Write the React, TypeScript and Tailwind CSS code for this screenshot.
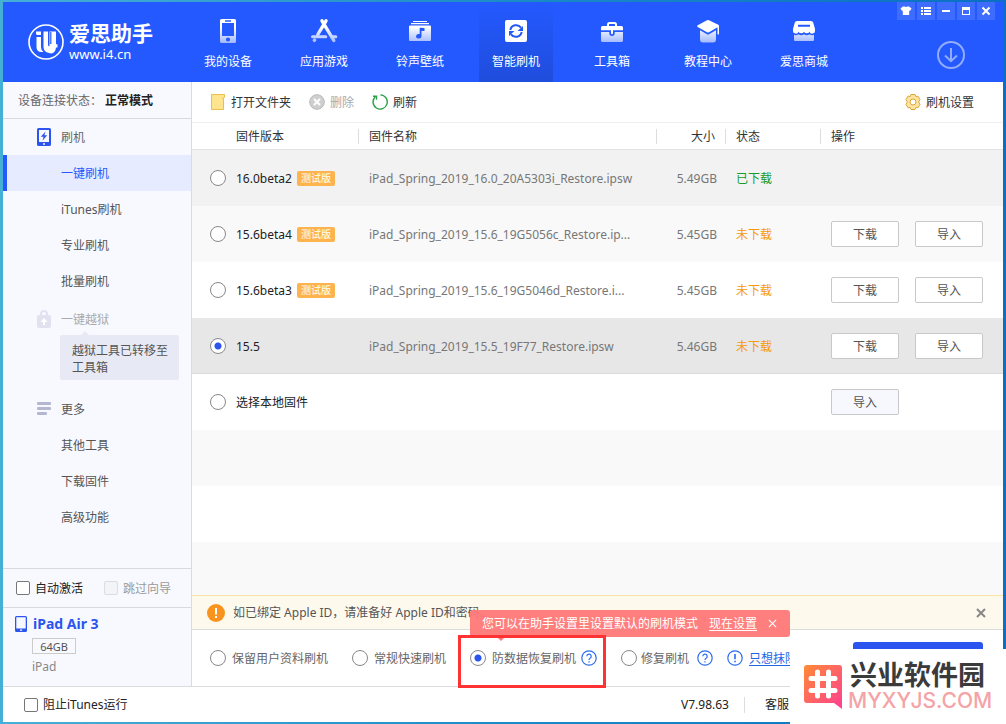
import React from 'react';

type IconProps = { className?: string };

function Fade({ id }: { id: string }) {
  return (
    <defs>
      <linearGradient id={id} x1="0" y1="8" x2="0" y2="24" gradientUnits="userSpaceOnUse">
        <stop offset="0" stopColor="#fff" />
        <stop offset="1" stopColor="#9fb7ff" />
      </linearGradient>
    </defs>
  );
}

const navIcons: Record<string, React.ReactNode> = {
  phone: (
    <>
      <Fade id="g-phone" />
      <path
        fill="url(#g-phone)"
        fillRule="evenodd"
        d="M5.5 0h13A1.5 1.5 0 0 1 20 1.5v21a1.5 1.5 0 0 1-1.5 1.5h-13A1.5 1.5 0 0 1 4 22.5v-21A1.5 1.5 0 0 1 5.500 0zM6 4v13h12V4zM9 1.3v1.5h6V1.3zM12 18.4a2.1 2.1 0 1 0 0 4.2 2.1 2.1 0 0 0 0-4.200z"
      />
    </>
  ),
  apps: (
    <>
      <Fade id="g-apps" />
      <g stroke="url(#g-apps)" strokeWidth="3.4" strokeLinecap="round" fill="none">
        <path d="M14 1.800 5.800 15.500M10 1.800 21.800 21.500M2.300 21.400l.3-.3" />
        <path d="M.5 17.800h13.300M20 17.800h3.800" strokeWidth="3" />
      </g>
    </>
  ),
  music: (
    <>
      <Fade id="g-music" />
      <path fill="#fff" d="M5 2h14v1H5zM3 4h18v1.3H3z" />
      <path fill="url(#g-music)" d="M2 6.5h20a1 1 0 0 1 1 1V21a1 1 0 0 1-1 1H2a1 1 0 0 1-1-1V7.5a1 1 0 0 1 1-1z" />
      <path fill="#2459ff" d="M11.7 8.8 16.500 9v3h-3v5.3a2.7 2.3 0 1 1-1.800-2.200z" />
    </>
  ),
  flash: (
    <>
      <rect x="1" y="1" width="22" height="22" rx="2" fill="#fff" />
      <g fill="none" stroke="#2458f2" strokeWidth="2">
        <path d="M6.3 11A6 6 0 0 1 17 8.600M17.700 13A6 6 0 0 1 7 15.400" />
      </g>
      <path fill="#2458f2" d="M19 7v5h-5.500zM5 17v-5h5.500z" />
    </>
  ),
  toolbox: (
    <>
      <Fade id="g-box" />
      <path fill="none" stroke="#fff" strokeWidth="2" d="M8 7.500V5.500A1.500 1.500 0 0 1 9.500 4h5A1.500 1.500 0 0 1 16 5.500V7.500" />
      <path fill="#fff" d="M2.500 7h19A1.500 1.500 0 0 1 23 8.500V11.300H1V8.500A1.500 1.500 0 0 1 2.500 7z" />
      <path fill="url(#g-box)" d="M1 13h8.300v1.300a2.700 2.700 0 0 0 5.400 0V13H23v8.500a1.500 1.500 0 0 1-1.500 1.500h-19A1.500 1.500 0 0 1 1 21.500z" />
      <path fill="#fff" d="M11 11h2v3.200a1 1 0 0 1-2 0z" />
    </>
  ),
  school: (
    <>
      <Fade id="g-school" />
      <path fill="#fff" d="M11 1.300q1-.5 2 0l9.300 4.500q.7.400.7 1V15q-.8 1-1.500 0V8.300L13 13.200q-1 .6-2 0L1.700 8q-1.300-.9 0-1.700z" />
      <path fill="url(#g-school)" d="M4 11.300l7 4q1 .5 2 0l7-4v9.200a3 3 0 0 1-3 3H7a3 3 0 0 1-3-3z" />
    </>
  ),
  shop: (
    <>
      <Fade id="g-shop" />
      <path
        fill="#fff"
        fillRule="evenodd"
        d="M5 2h14a2.500 2.500 0 0 1 2.300 1.700L23 10v2a2.800 2.500 0 0 1-5.500.8 2.900 2.300 0 0 1-5.500 0 2.900 2.300 0 0 1-5.500 0A2.800 2.500 0 0 1 1 12v-2l1.700-6.300A2.500 2.500 0 0 1 5 2zm1 3.800v2h12v-2z"
      />
      <path fill="url(#g-shop)" d="M2 15.800q2.500 1 4.500-.6 2.700 2 5.500 0 2.800 2 5.500 0 2 1.600 4.500.6V21a1 1 0 0 1-1 1H3a1 1 0 0 1-1-1z" />
    </>
  ),
};

const navItems = [
  { icon: 'phone', label: '我的设备' },
  { icon: 'apps', label: '应用游戏' },
  { icon: 'music', label: '铃声壁纸' },
  { icon: 'flash', label: '智能刷机', active: true },
  { icon: 'toolbox', label: '工具箱' },
  { icon: 'school', label: '教程中心' },
  { icon: 'shop', label: '爱思商城' },
];

const windowButtons = [
  { label: '皮肤', d: <path fill="#fff" d="M3 1.500h2q1 1 2 0h2L11.500 3.500 10 6l-.8-.5V10H2.800V5.500L2 6 .5 3.500z" /> },
  { label: '菜单', d: <path fill="#fff" d="M1 2h2v2H1zM4 2h7v2H4zM1 5h2v2H1zM4 5h7v2H4zM1 8h2v2H1zM4 8h7v2H4z" /> },
  { label: '最小化', d: <path fill="#fff" d="M2 5h8v2H2z" /> },
  { label: '最大化', d: <path fill="#fff" fillRule="evenodd" d="M2 2h8v8H2zM3 5v4h6V5z" /> },
  { label: '关闭', d: <path stroke="#fff" strokeWidth="2" d="m2.500 2.500 7 7m0-7-7 7" /> },
];

function Logo() {
  return (
    <svg viewBox="0 0 36 36" className="size-9 shrink-0">
      <circle cx="18" cy="18" r="17" fill="none" stroke="#fff" strokeWidth="1.6" />
      <g fill="#fff">
        <path d="M8 7.500h5v3.500H9q-1.500-1-1-3.500zM8.500 13H13v10q0 3 2.500 5h-2Q8.500 28 8.500 23z" />
        <path d="M15.500 7.500h4.500v13q0 2 1.500 2V7.500H28V20l1.500.5v3H28q-.5 5.500-5 6l-2-.5q-5.500-1-5.500-6z" />
      </g>
      <path stroke="#2459ff" strokeWidth="1.2" d="M22.800 8v12" />
    </svg>
  );
}

function HeaderBar() {
  return (
    <header className="flex h-20 shrink-0 bg-[#2459ff] text-white">
      <a href="#home" className="flex w-[188px] shrink-0 items-center gap-[5px] pl-[25px]">
        <Logo />
        <span className="flex flex-col whitespace-nowrap">
          <span className="text-[21px] leading-6 font-bold">爱思助手</span>
          <span className="text-[13px] leading-[18px]">www.i4.cn</span>
        </span>
      </a>
      <nav className="flex gap-[22px]">
        {navItems.map((item) => (
          <a
            key={item.label}
            href={'#' + item.icon}
            className={
              item.active
                ? 'flex w-[74px] flex-col items-center gap-[11px] bg-linear-to-b from-[#2459ff] to-[#1f4ddc] pt-[17px]'
                : 'flex w-[74px] flex-col items-center gap-[11px] pt-[17px]'
            }
          >
            <svg viewBox="0 0 24 24" className="size-6 overflow-visible">
              {navIcons[item.icon]}
            </svg>
            <span className="leading-4">{item.label}</span>
          </a>
        ))}
      </nav>
      <div className="ml-auto flex flex-col items-end gap-[21px] pr-2">
        <div className="flex gap-0.5">
          {windowButtons.map((b) => (
            <button key={b.label} type="button" aria-label={b.label} className="flex size-[18px] items-center justify-center bg-[#3d6cff]">
              <svg viewBox="0 0 12 12" className="size-3">
                {b.d}
              </svg>
            </button>
          ))}
        </div>
        <button type="button" aria-label="下载中心" className="mr-[30px]">
          <svg viewBox="0 0 28 28" className="size-7" fill="none" stroke="#92acff" strokeWidth="2">
            <circle cx="14" cy="14" r="13" />
            <path d="M14 7v13M8 14.500l6 5.700 6-5.700" />
          </svg>
        </button>
      </div>
    </header>
  );
}

function Check({ id, label, disabled }: { id: string; label: string; disabled?: boolean }) {
  return (
    <label htmlFor={id} className={disabled ? 'flex items-center gap-[5px] text-[#999]' : 'flex items-center gap-[5px] text-[#222]'}>
      <input
        id={id}
        type="checkbox"
        disabled={disabled}
        className="size-3.5 appearance-none rounded-[2px] border border-[#777] bg-white checked:bg-[#2b55ee] disabled:border-[#ddd] disabled:bg-[#f3f4f8]"
      />
      {label}
    </label>
  );
}

function Radio({ id, name, defaultChecked }: { id: string; name: string; defaultChecked?: boolean }) {
  return (
    <input
      id={id}
      name={name}
      type="radio"
      defaultChecked={defaultChecked}
      className="size-4 shrink-0 appearance-none rounded-full border border-[#888] bg-white checked:bg-[radial-gradient(circle,#2b55ee_3px,#fff_4px)]"
    />
  );
}

function SideLink({ label, active }: { label: string; active?: boolean }) {
  return (
    <a
      href={'#' + label}
      className={
        active
          ? 'flex h-9 items-center border-l-4 border-[#2459ff] bg-[#e7ebff] pl-[54px] text-[#2459ff]'
          : 'flex h-9 items-center pl-[58px] text-[#555]'
      }
    >
      {label}
    </a>
  );
}

function Sidebar() {
  return (
    <aside className="flex w-[189px] shrink-0 flex-col border-r border-[#d9dae2] bg-[#f8f9ff]">
      <p className="flex h-[37px] shrink-0 items-center border-b border-[#d9dae0] pl-[15px] whitespace-nowrap text-[#666]">
        设备连接状态：<span className="ml-[3px] font-bold text-[#222]">正常模式</span>
      </p>
      <nav className="flex flex-col">
        <div className="flex h-9 items-center gap-2.5 pl-[34px] text-[#666]">
          <svg viewBox="0 0 14 18" className="h-[18px] w-3.5">
            <path fill="#2b55ee" fillRule="evenodd" d="M1.500 0h11A1.500 1.500 0 0 1 14 1.500v15a1.500 1.500 0 0 1-1.500 1.500h-11A1.500 1.500 0 0 1 0 16.500v-15A1.500 1.500 0 0 1 1.500 0zM2 2v12h10V2zM6 15.300v1.400h2v-1.400z" />
            <path fill="#2b55ee" d="M8.500 3.500 3.800 8.800h2.700l-1 4 4.700-5.600H7.400z" />
          </svg>
          刷机
        </div>
        <SideLink label="一键刷机" active />
        <SideLink label="iTunes刷机" />
        <SideLink label="专业刷机" />
        <SideLink label="批量刷机" />
        <div className="mt-1 flex h-8 items-center gap-2.5 pl-[34px] text-[#aaa]">
          <svg viewBox="0 0 14 18" className="h-[18px] w-3.5">
            <path fill="none" stroke="#e0e2f0" strokeWidth="2" d="M4 6V4a3 3 0 0 1 6 0v2" />
            <rect y="5" width="14" height="13" rx="2" fill="#e0e2f0" />
            <path fill="#fff" d="M7 8l3.500 4H8v3H6v-3H3.500z" />
          </svg>
          一键越狱
        </div>
        <div className="relative mr-3 ml-[57px] rounded-[2px] bg-[#e7eaf5] pt-[7px] pb-1 pl-3 leading-[17px] text-[#555]">
          <svg viewBox="0 0 8 4" className="absolute -top-1 left-[21px] h-1 w-2">
            <path fill="#e7eaf5" d="M0 4 4 0l4 4z" />
          </svg>
          越狱工具已转移至
          <br />
          工具箱
        </div>
        <div className="mt-[11px] flex h-9 items-center gap-2.5 pl-[34px] text-[#555]">
          <svg viewBox="0 0 14 14" className="size-3.5" fill="#b3b8d0">
            <rect y="0" width="14" height="3" rx="1" />
            <rect y="5" width="14" height="3" rx="1" />
            <rect y="10" width="10" height="3" rx="1" />
          </svg>
          更多
        </div>
        <SideLink label="其他工具" />
        <SideLink label="下载固件" />
        <SideLink label="高级功能" />
      </nav>
      <div className="mt-auto flex h-[39px] shrink-0 items-center gap-[21px] border-t border-[#d9dae0] pl-[13px] whitespace-nowrap">
        <Check id="auto" label="自动激活" />
        <Check id="skip" label="跳过向导" disabled />
      </div>
      <section className="flex h-[79px] shrink-0 flex-col border-t border-[#d9dae0] pt-2 pl-3">
        <h2 className="flex items-center gap-1.5 text-[14px] leading-4 font-bold text-[#2b55ee]">
          <svg viewBox="0 0 12 16" className="h-4 w-3">
            <path fill="#2b55ee" fillRule="evenodd" d="M1.500 0h9A1.500 1.500 0 0 1 12 1.500v13a1.500 1.500 0 0 1-1.500 1.500h-9A1.500 1.500 0 0 1 0 14.500v-13A1.500 1.500 0 0 1 1.500 0zM1.300 1.300v11.200h9.400V1.300zM5 13.500v1.200h2.200v-1.200z" />
          </svg>
          iPad Air 3
        </h2>
        <span className="mt-1.5 ml-[17px] flex h-4 w-11 items-center justify-center border border-[#ccc] text-[11px] text-[#555]">64GB</span>
        <span className="mt-[5px] ml-[17px] leading-4 text-[#888]">iPad</span>
      </section>
    </aside>
  );
}

function Toolbar() {
  return (
    <div className="flex h-[41px] shrink-0 items-center gap-[18px] border-b border-[#f0f0f0] pr-[29px] pl-[18px] text-[#333]">
      <button type="button" className="flex items-center gap-[5px]">
        <svg viewBox="0 0 16 16" className="size-4">
          <path fill="#ffe48f" stroke="#e8c04c" d="M1.500.5h13v2.500l-1 1.500v11h-12z" />
          <path fill="#e8c04c" d="M12 3.500h2V5h-2z" opacity=".5" />
        </svg>
        打开文件夹
      </button>
      <button type="button" disabled className="flex items-center gap-[5px] text-[#aaa]">
        <svg viewBox="0 0 16 16" className="size-4">
          <circle cx="8" cy="8" r="7.3" fill="#cfcfcf" stroke="#b8b8b8" />
          <path stroke="#fff" strokeWidth="1.8" d="m5 5 6 6m0-6-6 6" />
        </svg>
        删除
      </button>
      <button type="button" className="flex items-center gap-[5px]">
        <svg viewBox="0 0 16 16" className="size-4" fill="none" stroke="#2ba245" strokeWidth="1.4">
          <path d="M3.300 2.800A7.100 7.100 0 1 0 8.500.9" />
          <path d="M1 2.300h3.500v3.500" />
        </svg>
        刷新
      </button>
      <button type="button" className="ml-auto flex items-center gap-[5px]">
        <svg viewBox="0 0 16 16" className="size-4" stroke="#dba63a" strokeLinejoin="round">
          <path fill="#ffe3a0" d="M6 .5h4l.8 2 2.200-.3 2 3.400L13.600 8l1.400 2.400-2 3.400-2.200-.3-.8 2H6l-.8-2-2.200.3-2-3.400L2.400 8 1 5.600l2-3.400 2.200.3z" />
          <circle cx="8" cy="8" r="3" fill="#fff" />
        </svg>
        刷机设置
      </button>
    </div>
  );
}

const rows = [
  { id: 'v16b2', version: '16.0beta2', beta: true, file: 'iPad_Spring_2019_16.0_20A5303i_Restore.ipsw', size: '5.49GB', done: true, bg: 'bg-[#f2f2f2]' },
  { id: 'v156b4', version: '15.6beta4', beta: true, file: 'iPad_Spring_2019_15.6_19G5056c_Restore.ip...', size: '5.45GB', bg: 'bg-[#f9f9f9]' },
  { id: 'v156b3', version: '15.6beta3', beta: true, file: 'iPad_Spring_2019_15.6_19G5046d_Restore.i...', size: '5.45GB', bg: 'bg-white' },
  { id: 'v155', version: '15.5', file: 'iPad_Spring_2019_15.5_19F77_Restore.ipsw', size: '5.46GB', selected: true, bg: 'bg-[#e7e7e7] shadow-[inset_0_-1px_0_#d9d9d9]' },
];

function ActionButton({ label, tinted }: { label: string; tinted?: boolean }) {
  return (
    <button
      type="button"
      className={
        tinted
          ? 'h-[26px] w-[68px] rounded-[2px] border border-[#c8c8c8] bg-[#f7f8fd] text-[#555]'
          : 'h-[26px] w-[68px] rounded-[2px] border border-[#c8c8c8] bg-white text-[#555]'
      }
    >
      {label}
    </button>
  );
}

function FirmwareTable() {
  const head = 'h-[27px] border-b border-[#e3e3e3] p-0 text-left font-normal';
  return (
    <table className="w-full table-fixed border-separate border-spacing-0">
      <colgroup>
        <col className="w-[167px]" />
        <col />
        <col className="w-[69px]" />
        <col className="w-[95px]" />
        <col className="w-[182px]" />
      </colgroup>
      <thead className="text-[#333]">
        <tr>
          <th className={head}>
            <div className="border-r border-[#ddd] pl-11 leading-[15px]">固件版本</div>
          </th>
          <th className={head}>
            <div className="border-r border-[#ddd] pl-2.5 leading-[15px]">固件名称</div>
          </th>
          <th className={head}>
            <div className="border-r border-[#ddd] pr-2.5 text-right leading-[15px]">大小</div>
          </th>
          <th className={head}>
            <div className="border-r border-[#ddd] pl-2.5 leading-[15px]">状态</div>
          </th>
          <th className={head}>
            <div className="pl-2.5 leading-[15px]">操作</div>
          </th>
        </tr>
      </thead>
      <tbody className="text-[#777]">
        {rows.map((r) => (
          <tr key={r.id} className={r.bg}>
            <td className="h-14 p-0 pl-[18px]">
              <label htmlFor={r.id} className="flex items-center gap-2.5 text-[#222]">
                <Radio id={r.id} name="firmware" defaultChecked={r.selected} />
                <span className="flex items-center gap-[5px]">
                  {r.version}
                  {r.beta && <span className="rounded-[2px] bg-[#fdb44e] px-1 text-[10px] leading-[15px] whitespace-nowrap text-white">测试版</span>}
                </span>
              </label>
            </td>
            <td className="p-0 pl-2.5 whitespace-nowrap">{r.file}</td>
            <td className="p-0 pr-[9px] text-right">{r.size}</td>
            <td className={r.done ? 'p-0 pl-2.5 text-[#159a2c]' : 'p-0 pl-2.5 text-[#f59a0c]'}>{r.done ? '已下载' : '未下载'}</td>
            <td className="p-0 pl-2.5">
              {!r.done && (
                <div className="flex gap-4">
                  <ActionButton label="下载" />
                  <ActionButton label="导入" />
                </div>
              )}
            </td>
          </tr>
        ))}
        <tr className="bg-white">
          <td colSpan={4} className="h-14 p-0 pl-[18px]">
            <label htmlFor="local" className="flex items-center gap-2.5 text-[#222]">
              <Radio id="local" name="firmware" />
              选择本地固件
            </label>
          </td>
          <td className="p-0 pl-2.5">
            <ActionButton label="导入" tinted />
          </td>
        </tr>
      </tbody>
    </table>
  );
}

function Notice() {
  return (
    <div className="flex h-[35px] shrink-0 items-center gap-2 border-t border-b border-t-[#fbe3a2] border-b-[#dcdcdc] bg-[#fef9ed] pr-4 pl-[15px] text-[#555]">
      <svg viewBox="0 0 18 18" className="size-[18px]">
        <circle cx="9" cy="9" r="9" fill="#f8941d" />
        <path stroke="#fff" strokeWidth="2" d="M9 4v6.500M9 12v2" />
      </svg>
      <span>如已绑定 Apple ID，请准备好 Apple ID和密码。</span>
      <button type="button" aria-label="关闭提示" className="ml-auto">
        <svg viewBox="0 0 12 12" className="size-3" stroke="#888" strokeWidth="2">
          <path d="m2 2 8 8m0-8-8 8" />
        </svg>
      </button>
    </div>
  );
}

function Help({ className }: IconProps) {
  return (
    <svg viewBox="0 0 16 16" className={className} fill="none" stroke="#2b6cee" strokeWidth="1.2">
      <circle cx="8" cy="8" r="7.2" />
      <path d="M5.800 6.300a2.200 2.200 0 1 1 3.300 1.900q-1.100.6-1.100 1.900M8 11.300v1.300" />
    </svg>
  );
}

function FlashOptions() {
  return (
    <div className="flex h-14 shrink-0 items-center pl-[18px] whitespace-nowrap text-[#666]">
      <label htmlFor="keep" className="flex items-center gap-1.5">
        <Radio id="keep" name="mode" />
        保留用户资料刷机
      </label>
      <label htmlFor="quick" className="ml-6 flex items-center gap-1.5">
        <Radio id="quick" name="mode" />
        常规快速刷机
      </label>
      <div className="relative ml-6 flex h-4 items-center gap-[5px]">
        <label htmlFor="recover" className="flex items-center gap-1.5">
          <Radio id="recover" name="mode" defaultChecked />
          防数据恢复刷机
        </label>
        <Help className="size-4" />
        <div className="absolute bottom-[29px] left-0 flex h-[27px] w-max items-center gap-[11px] rounded-[3px] bg-[#ff7878]/95 pr-[13px] pl-3 text-white">
          <span>您可以在助手设置里设置默认的刷机模式</span>
          <a href="#settings" className="underline underline-offset-2">
            现在设置
          </a>
          <button type="button" aria-label="关闭">
            <svg viewBox="0 0 10 10" className="size-[9px]" stroke="#fff" strokeWidth="1.2">
              <path d="m1 1 8 8m0-8-8 8" />
            </svg>
          </button>
          <svg viewBox="0 0 8 4" className="absolute top-full left-[27px] h-1 w-2">
            <path fill="#ff7878" d="M0 0h8L4 4z" />
          </svg>
        </div>
        <div className="pointer-events-none absolute -top-[15px] -left-3 h-[53px] w-[148px] border-3 border-[#ff3333]" />
      </div>
      <div className="ml-6 flex items-center gap-2">
        <label htmlFor="repair" className="flex items-center gap-1">
          <Radio id="repair" name="mode" />
          修复刷机
        </label>
        <Help className="size-4" />
      </div>
      <a href="#erase" className="ml-3.5 flex items-center gap-1.5 text-[#1f66e5]">
        <svg viewBox="0 0 16 16" className="size-4" fill="none" stroke="#2b6cee" strokeWidth="1.2">
          <circle cx="8" cy="8" r="7.2" />
          <path strokeWidth="1.6" d="M8 4v5.300M8 10.800v1.500" />
        </svg>
        <span className="underline underline-offset-2">只想抹除</span>
      </a>
      <button type="button" aria-label="立即刷机" className="mr-5 ml-auto h-8 w-[130px] rounded-[3px] bg-[#2b55ee]" />
    </div>
  );
}

function Watermark() {
  return (
    <div className="absolute right-0 bottom-0 flex h-[75px] w-[216px] items-center gap-1.5 bg-white pl-3.5">
      <svg viewBox="0 0 38 44" className="h-11 w-[38px] shrink-0">
        <defs>
          <linearGradient id="brand" x1="0" y1="0" x2="1" y2="1">
            <stop offset="0" stopColor="#ff8a35" />
            <stop offset="1" stopColor="#ff3f92" />
          </linearGradient>
        </defs>
        <path fill="url(#brand)" d="M3 0h32a3 3 0 0 1 3 3v41l-8-6H3a3 3 0 0 1-3-3V3a3 3 0 0 1 3-3z" />
        <path stroke="#fff" strokeWidth="5" strokeLinecap="round" d="M13.500 7v24M24.500 7v24M7 13.500h24M7 25.500h24" />
      </svg>
      <div className="whitespace-nowrap">
        <p className="pl-0.5 text-[27px] leading-[28px] font-bold text-[#3b3b3b]">兴业软件园</p>
        <p className="font-['Inter',sans-serif] text-[21px] leading-6 font-medium text-[#f4a3a6]">MYXYJS.COM</p>
      </div>
    </div>
  );
}

export default function App() {
  return (
    <div className="relative flex min-h-screen flex-col bg-linear-to-r from-[#45b0d6] via-[#1a8cc8] to-[#0b6fc3] px-[3px] py-0.5 font-['Noto_Sans','Noto_Sans_CJK_SC',sans-serif] text-[12px] leading-[17px]">
      <div className="flex flex-1 flex-col bg-white">
        <HeaderBar />
        <div className="flex flex-1">
          <Sidebar />
          <main className="flex min-w-0 flex-1 flex-col bg-white">
            <Toolbar />
            <FirmwareTable />
            <div className="flex-1 bg-[repeating-linear-gradient(#f9f9f9_0_56px,#fff_56px_112px)]" />
            <Notice />
            <FlashOptions />
          </main>
        </div>
        <footer className="flex h-9 shrink-0 items-center border-t border-[#dcdcdc] pr-[214px] pl-[21px] text-[#222]">
          <Check id="block" label="阻止iTunes运行" />
          <span className="ml-auto">V7.98.63</span>
          <span className="mx-[15px] h-4 w-px bg-[#ddd]" />
          <a href="#service" className="ml-[5px]">
            客服
          </a>
        </footer>
      </div>
      <Watermark />
    </div>
  );
}
